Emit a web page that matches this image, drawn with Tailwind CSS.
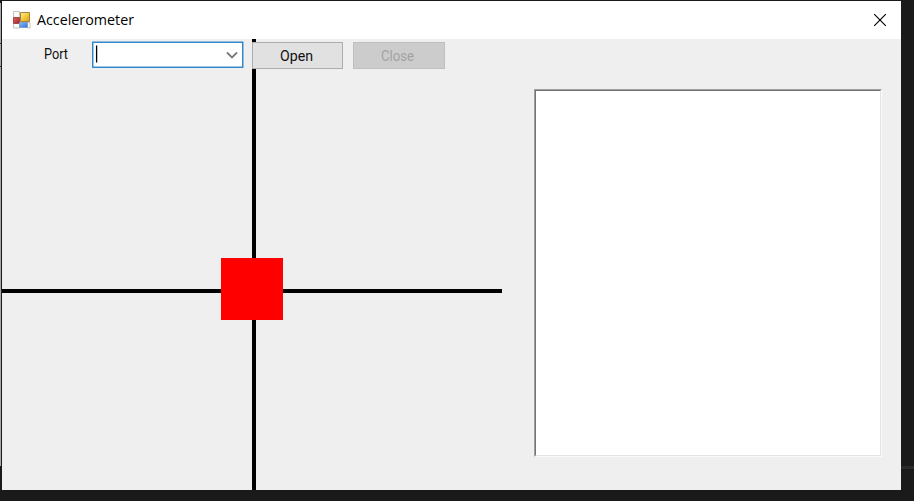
<!DOCTYPE html>
<html lang="en">
<head>
<meta charset="utf-8">
<title>Accelerometer</title>
<script src="https://cdn.jsdelivr.net/npm/@tailwindcss/browser@4"></script>
</head>
<body class="relative h-[501px] w-[914px] overflow-hidden bg-[#1a1a1a] font-['Open_Sans','Noto_Sans',sans-serif]">
  <!-- Desktop visible around the window -->
  <div class="absolute left-0 top-[3px] h-[463px] w-px bg-[#a9a9a9]"></div>
  <div class="absolute left-0 top-[43px] h-px w-px bg-[#333]"></div>
  <div class="absolute left-0 top-[66px] h-px w-px bg-[#333]"></div>
  <div class="absolute right-0 top-[466px] h-[3px] w-[13px] bg-[#2a2a2a]"></div>

  <main class="relative ml-[2px] mt-px flex h-[489px] w-[899px] flex-col bg-[#efefef]">
    <header class="flex h-[38px] shrink-0 items-center bg-white pl-[11px] pr-[14px]">
      <svg class="h-[18px] w-[18px] shrink-0" viewBox="0 0 18 18">
        <defs>
          <linearGradient id="yellow" x2="1" y2="1"><stop stop-color="#ffee90"/><stop offset=".5" stop-color="#f5ca3c"/><stop offset="1" stop-color="#d99b18"/></linearGradient>
          <linearGradient id="blue" x2="1" y2="1"><stop stop-color="#8bbcf8"/><stop offset="1" stop-color="#2f6ed6"/></linearGradient>
          <linearGradient id="red" x2="1" y2="1"><stop stop-color="#dc6a60"/><stop offset="1" stop-color="#a01c22"/></linearGradient>
        </defs>
        <path d="M.5 .5h6v6h-6zM.5 12.500h6v4.500h-6zM14.500 11.500h2.500v5.500h-2.500z" fill="#fafafa" stroke="#c9c2b6"/>
        <path d="M.5 6.500h6v6h-6z" fill="url(#red)" stroke="#a7464b"/>
        <path d="M6.500 11.500h8v5h-8z" fill="url(#blue)" stroke="#7f9fd0"/>
        <path d="M7.500 1.500h9v9h-9z" fill="url(#yellow)" stroke="#a08440"/>
      </svg>
      <h1 class="ml-[6px] h-[22px] text-black"><svg class="block h-[22px] w-[100px] overflow-visible"><text x="0" y="16" textLength="97" lengthAdjust="spacingAndGlyphs" font-size="15">Accelerometer</text></svg></h1>
      <svg class="ml-auto h-[14px] w-[14px]" viewBox="0 0 14 14" fill="none" stroke="#000" stroke-width="1.15"><path d="M1.200 1.200l11.600 11.600M12.800 1.200L1.200 12.800"/></svg>
    </header>

    <div class="relative flex h-[451px] justify-between">
      <!-- Axis display -->
      <section class="relative h-[451px] w-[500px] shrink-0">
        <div class="absolute left-[250px] top-0 h-[451px] w-[4px] bg-black"></div>
        <div class="absolute left-0 top-[250px] h-[4px] w-[500px] bg-black"></div>
        <div class="absolute left-[219px] top-[219px] h-[62px] w-[62px] bg-[#ff0000]"></div>
        <div class="relative flex items-start pl-[42px] pt-[2px] font-[Roboto,sans-serif] text-[15px]">
          <svg class="h-[26px] w-[48px] overflow-visible"><text x="0" y="18" textLength="24" lengthAdjust="spacingAndGlyphs" fill="#111">Port</text></svg>
          <svg class="h-[27px] w-[152px]" viewBox="0 0 152 27">
            <rect x=".75" y="1.250" width="150" height="25" fill="#fff" stroke="#2783cb" stroke-width="1.400"/>
            <path d="M4.600 4.500v17" stroke="#000" stroke-width="1.300"/>
            <path d="M135 11.500l5 5 5-5" fill="none" stroke="#7a7a7a" stroke-width="1.800"/>
          </svg>
          <button class="ml-[8px] mt-px h-[27px] w-[91px] border border-[#adadad] bg-[#e1e1e1]"><svg class="block h-[25px] w-[89px]"><text x="27" y="18" textLength="33" lengthAdjust="spacingAndGlyphs" fill="#111">Open</text></svg></button>
          <button class="ml-[10px] mt-px h-[27px] w-[92px] border border-[#bfbfbf] bg-[#cccccc]" disabled><svg class="block h-[25px] w-[90px]"><text x="27" y="18" textLength="33" lengthAdjust="spacingAndGlyphs" fill="#a3a3a3">Close</text></svg></button>
        </div>
      </section>
      <!-- Data log -->
      <section class="mr-[19px] mt-[50px] h-[368px] w-[348px] border border-b-[#fafafa] border-l-[#a0a0a0] border-r-[#fafafa] border-t-[#a0a0a0]">
        <div class="h-full w-full border border-b-[#e3e3e3] border-l-[#737373] border-r-[#e3e3e3] border-t-[#737373] bg-white"></div>
      </section>
    </div>
  </main>
</body>
</html>
